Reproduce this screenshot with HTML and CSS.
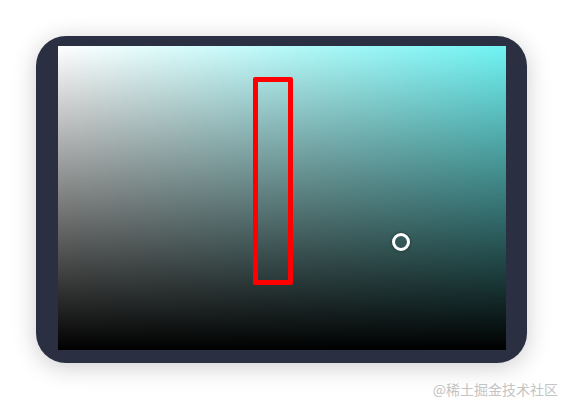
FILE: index.html
```html
<!DOCTYPE html>
<html>
<head>
<meta charset="utf-8">
<link rel="stylesheet" href="styles.css">
</head>
<body>
<div class="page">
  <div class="frame">
    <div class="panel">
      <div class="selection"></div>
      <div class="cursor"></div>
    </div>
  </div>
  <div class="watermark">@稀土掘金技术社区</div>
</div>
</body>
</html>
```
FILE: styles.css
```css
html, body {
  margin: 0;
  padding: 0;
  background: #ffffff;
}
.page {
  width: 564px;
  height: 400px;
  box-sizing: border-box;
  padding: 36px 0 0 36px;
  display: flex;
  flex-direction: column;
}
.frame {
  width: 491px;
  height: 327px;
  box-sizing: border-box;
  padding: 10px 21px 13px 22px;
  background: #2b2f42;
  border-radius: 30px;
  box-shadow: 0 4px 24px rgba(0, 0, 0, 0.2);
}
.panel {
  position: relative;
  width: 448px;
  height: 304px;
  background:
    linear-gradient(to bottom, rgba(0,0,0,0) 0%, #000 100%),
    linear-gradient(to right, #ffffff 0%, #70f3f3 100%);
}
.selection {
  position: absolute;
  left: 195px;
  top: 31px;
  width: 40px;
  height: 208px;
  box-sizing: border-box;
  border: 5px solid #ff0000;
  border-radius: 2px;
}
.cursor {
  position: absolute;
  left: 334px;
  top: 187px;
  width: 18px;
  height: 18px;
  box-sizing: border-box;
  border: 3px solid #ffffff;
  border-radius: 50%;
  box-shadow: 0 0 3px rgba(0,0,0,0.5);
}
.watermark {
  margin-top: 17px;
  width: 522px;
  text-align: right;
  font-family: "Noto Sans CJK SC", sans-serif;
  font-size: 14px;
  line-height: 18px;
  color: #c4c4c4;
}
```
